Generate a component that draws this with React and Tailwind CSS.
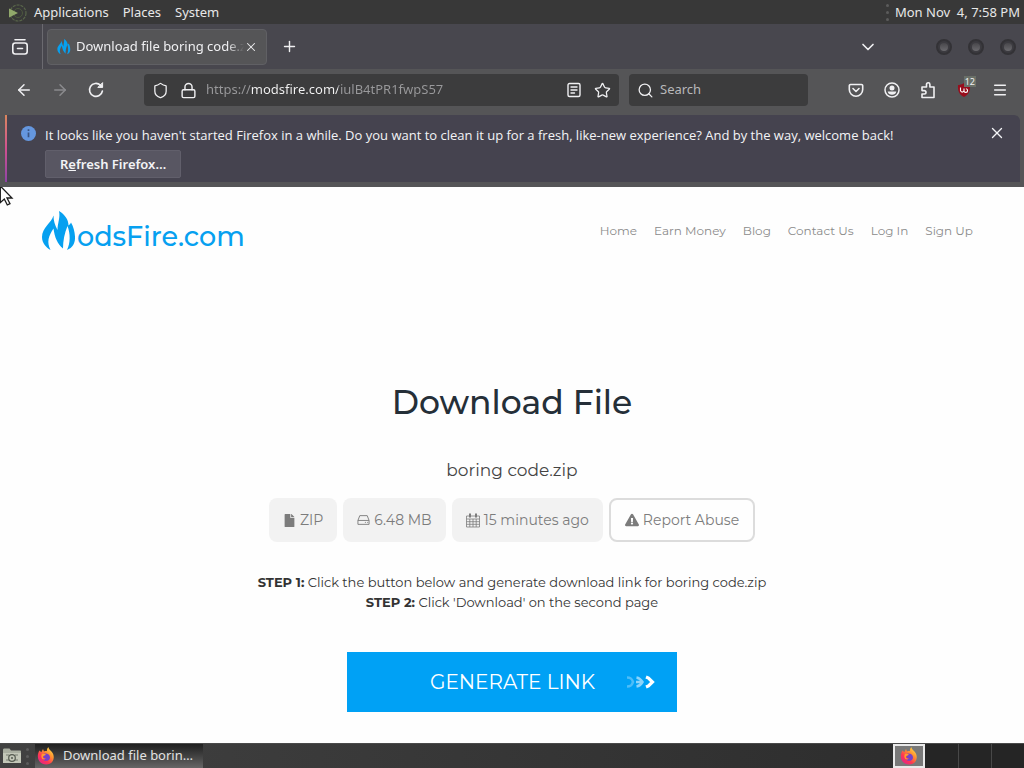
import { useId } from 'react';
import {
  ArrowLeft,
  ArrowRight,
  ChevronDown,
  Lock,
  Menu,
  Plus,
  Search,
  Shield,
  Star,
  X,
} from 'lucide-react';
import { FaExclamationTriangle, FaFile } from 'react-icons/fa';

const UI_FONT = "font-['Noto_Sans',sans-serif]";
const SITE_FONT = "font-['Montserrat',Inter,sans-serif]";

const navLinks = [
  'Home',
  'Earn Money',
  'Blog',
  'Contact Us',
  'Log In',
  'Sign Up',
];

const HistoryIcon = () => (
  <svg width="18" height="18" viewBox="0 0 18 18" fill="none" stroke="currentColor" strokeWidth="1.6" strokeLinecap="round">
    <path d="M4 1.8h10M6.5 10.5h5" />
    <rect x="1.8" y="5" width="14.4" height="11" rx="2.5" />
  </svg>
);

const ReloadIcon = () => (
  <svg width="18" height="18" viewBox="0 0 18 18" fill="none" stroke="currentColor" strokeWidth="1.6" strokeLinecap="round">
    <path d="M15.4 10a6.5 6.5 0 1 1-2-5.9L15 5.7" />
    <path d="M15.6 2v4.4h-4.4z" fill="currentColor" strokeWidth="1" strokeLinejoin="round" />
  </svg>
);

const ReaderIcon = () => (
  <svg width="16" height="16" viewBox="0 0 16 16" fill="none" stroke="currentColor" strokeWidth="1.4" strokeLinecap="round">
    <rect x="2" y="1.5" width="12" height="13" rx="1.5" />
    <path d="M5 5h6M5 8h6M5 11h3.5" />
  </svg>
);

const PocketIcon = () => (
  <svg width="16" height="16" viewBox="0 0 16 16" fill="none" stroke="currentColor" strokeWidth="1.6" strokeLinecap="round" strokeLinejoin="round">
    <path d="M2.5 2.5h11a1.2 1.2 0 0 1 1.2 1.2V7.5a6.7 6.7 0 0 1-13.4 0V3.7a1.2 1.2 0 0 1 1.2-1.2z" />
    <path d="M5 6.5l3 3 3-3" />
  </svg>
);

const AccountIcon = () => (
  <svg width="16" height="16" viewBox="0 0 16 16" fill="none">
    <circle cx="8" cy="8" r="7" stroke="currentColor" strokeWidth="1.5" />
    <circle cx="8" cy="6" r="2.5" fill="currentColor" />
    <path d="M3.7 9.5h8.6c-.3 2.1-2.2 3.3-4.3 3.3s-4-1.2-4.3-3.3z" fill="currentColor" />
  </svg>
);

const PuzzleIcon = () => (
  <svg width="16" height="18" viewBox="1 0 16 18" fill="none" stroke="currentColor" strokeWidth="1.6" strokeLinejoin="round">
    <path d="M3 6h4.5V3.5a1.7 1.7 0 0 1 3.4 0V6H15v10.5H3V13h2.3a1.7 1.7 0 0 0 0-3.4H3z" />
  </svg>
);

const UblockIcon = () => (
  <svg width="16" height="16" viewBox="0 0 16 16" fill="none">
    <path d="M8 1c2.3 1.6 4.3 2 6 2 .4 6-1.2 9.5-6 12C3.2 12.5 1.6 9 2 3c1.7 0 3.700-.4 6-2z" fill="#980d1c" />
    <path d="M4.5 5.5v3.2a1.8 1.8 0 0 0 3.5 0V6.5M8 8.7a1.8 1.8 0 1 0 1.9-1.9" stroke="#fff" strokeWidth="1.1" />
  </svg>
);

const DesktopMenuIcon = () => (
  <svg width="20" height="20" viewBox="0 0 20 20" fill="none">
    <circle cx="10" cy="10" r="8" stroke="#59664a" strokeWidth="1.2" strokeDasharray="3 1" />
    <circle cx="10" cy="10" r="4.5" stroke="#4c583e" strokeWidth="1" />
    <path d="M1 5.5l9 4.5-9 4.5z" fill="#91a86b" />
  </svg>
);

const FlameMark = ({ className }) => (
  <svg className={className} viewBox="0 0 36 41" fill="#06a0f0" aria-hidden="true">
    <path d="M12.5 4.5C10.5 12 1 16.500 1 26c0 6 4 10.500 8.500 13C5.500 31 7.500 25 12.500 17.500 13.500 26 16.500 33 22 37.500c0-8 1.500-15 4.500-22.500 3 8 3 17-.5 24C31.500 37 34.500 32 34 25.500 33.700 20 32.500 16 30 11.500c-.3 1.200-1.300 1.800-2.500 3C27.500 8 23.500 3.500 18 0c1.500 6.500-1.500 12-1.500 19-2.700-5-4-9.500-4-14.500z" />
  </svg>
);

const FirefoxIcon = () => {
  const id = useId();
  return (
    <svg width="18" height="18" viewBox="0 0 18 18" className="shrink-0" aria-hidden="true">
      <defs>
        <linearGradient id={id} x1="1" y1="0" x2="0.2" y2="1">
          <stop offset="0" stopColor="#fff44f" />
          <stop offset=".4" stopColor="#ff9230" />
          <stop offset=".7" stopColor="#ff3850" />
          <stop offset="1" stopColor="#e1228d" />
        </linearGradient>
      </defs>
      <path d="M2.500 3.500L4.300 5.200 6 2l1 2.600C8 4 9 4 10 4.200 9.600 2.500 10.400 1 11.500.2c.3 2.300 2 3.100 3.200 4.500C18.500 9 17.200 17.300 9.200 17.500 1.500 17.500-1.300 9.500 2.500 3.500z" fill={`url(#${id})`} />
      <path d="M5.500 7.500C8 5.600 13 6.500 13 10.500c0 4-6 4.500-7 1.200 1 .7 2 .7 3-.2-1.800 0-3-.8-2.500-2.500z" fill="#7542c9" />
      <path d="M5 7c1.500-.7 3-.3 4 .7-1 .6-2 .8-3 1.600-.6 1.400.5 2.600 2.500 2.400-1 1.200-3.500.8-4-1.200C4.200 9 4.500 8 5 7z" fill="#ff9b2f" />
    </svg>
  );
};

const FileManagerIcon = () => (
  <svg width="20" height="18" viewBox="0 0 20 18" aria-hidden="true">
    <path d="M1 3c0-1 .5-1.500 1.500-1.500h5L9 3.500h9c.7 0 1 .5 1 1V16H1z" fill="#a9aea0" />
    <path d="M1 6h18v10H1z" fill="#c3c7b8" />
    <path d="M4 8h3M13 8h3M4 13h3M13 13h3" stroke="#777d70" />
    <circle cx="10" cy="11" r="3.3" fill="none" stroke="#555b50" strokeWidth="1.2" />
    <circle cx="10" cy="11" r="1" fill="#555b50" />
  </svg>
);

const DriveIcon = () => (
  <svg width="13" height="12" viewBox="0 0 14 12" fill="none" stroke="currentColor" strokeLinejoin="round" aria-hidden="true">
    <path d="M1 6.5L3 1.3h8l2 5.2v4.2H1zM1 6.5h12M8.5 8.6h1M11 8.6h1" />
  </svg>
);

const CalendarIcon = () => (
  <svg width="14" height="15" viewBox="0 0 14 15" fill="none" stroke="currentColor" strokeWidth=".8" aria-hidden="true">
    <path d="M.5 3h13v11H.5zM.5 6h13M.5 8.7h13M.5 11.3h13M3.800 6v8M7 6v8M10.2 6v8" />
    <path d="M4 .5v4M10 .5v4" strokeWidth="2" />
  </svg>
);

const Grip = () => (
  <div className="flex flex-col gap-1" aria-hidden="true">
    {[0, 1, 2].map((i) => (
      <span key={i} className="size-[3px] rounded-full bg-[#5c5c5c]" />
    ))}
  </div>
);

const DesktopPanel = () => (
  <header className="flex h-6 items-center justify-between bg-[#383838] pt-px pr-1 pl-2 text-[13px] text-[#e8e8e8]">
    <nav className="flex items-center gap-3.5" aria-label="Desktop">
      <button className="flex items-center gap-1.5">
        <DesktopMenuIcon />
        Applications
      </button>
      <button>Places</button>
      <button>System</button>
    </nav>
    <div className="flex items-center gap-1.5">
      <Grip />
      <time>Mon Nov&nbsp; 4, 7:58 PM</time>
    </div>
  </header>
);

const WindowButton = ({ label }) => (
  <button
    aria-label={label}
    className="flex size-4 items-center justify-center rounded-full border-2 border-[#333236] bg-[#3c3b40]"
  >
    <span className="size-2 rounded-full bg-linear-to-b from-[#48474b] to-[#6b6a6e]" />
  </button>
);

const TabStrip = () => (
  <div className="flex h-[45px] items-center justify-between bg-[#48474e] pr-2 text-[#f0f0f2]">
    <div className="flex h-full items-center">
      <button aria-label="View recent browsing" className="flex h-full w-[43px] items-center justify-center border-r border-[#6b6a70] pr-0.5">
        <HistoryIcon />
      </button>
      <div className="ml-1 flex h-9 w-[220px] items-center rounded-sm border border-[#606064] bg-[#555557] pr-2 pl-2">
        <FlameMark className="size-4 shrink-0" />
        <span className="ml-1 flex-1 overflow-hidden text-[13px] whitespace-nowrap [mask-image:linear-gradient(to_right,black_90%,transparent)]">
          Download file boring code.zip
        </span>
        <button aria-label="Close tab">
          <X size={14} strokeWidth={1.8} />
        </button>
      </div>
      <button aria-label="New tab" className="ml-3.5">
        <Plus size={17} strokeWidth={2} />
      </button>
    </div>
    <div className="flex items-center">
      <button aria-label="List all tabs" className="mr-[58px]">
        <ChevronDown size={20} strokeWidth={2} />
      </button>
      <div className="flex items-center gap-4">
        <WindowButton label="Minimize" />
        <WindowButton label="Maximize" />
        <WindowButton label="Close" />
      </div>
    </div>
  </div>
);

const Toolbar = () => (
  <div className="flex h-[46px] items-center bg-[#555557] pr-4 pb-1 pl-[15px] text-[#f0f0f2]">
    <div className="flex items-center gap-[18px]">
      <button aria-label="Back"><ArrowLeft size={18} /></button>
      <button aria-label="Forward" className="text-[#8b8b8e]"><ArrowRight size={18} /></button>
      <button aria-label="Reload"><ReloadIcon /></button>
    </div>
    <div className="ml-[39px] flex h-8 flex-1 items-center rounded-sm bg-[#3c3c3d] px-2">
      <Shield size={17} strokeWidth={1.8} className="shrink-0" />
      <Lock size={17} strokeWidth={2} className="ml-[11px] shrink-0" />
      <input
        aria-label="Address"
        defaultValue="https://modsfire.com/iulB4tPR1fwpS57"
        className="ml-[9px] min-w-0 flex-1 bg-[linear-gradient(to_right,#99999b_45px,#f4f4f4_45px,#f4f4f4_132px,#99999b_132px)] bg-clip-text text-[13px] text-transparent outline-none"
      />
      <button aria-label="Reader view"><ReaderIcon /></button>
      <button aria-label="Bookmark this page" className="ml-3"><Star size={17} strokeWidth={1.8} /></button>
    </div>
    <label className="ml-2.5 flex h-8 w-[179px] items-center gap-1.5 rounded-sm bg-[#3c3c3d] px-2">
      <Search size={17} strokeWidth={1.8} className="shrink-0" />
      <input
        type="text"
        aria-label="Search"
        placeholder="Search"
        className="min-w-0 flex-1 text-[13px] outline-none placeholder:text-[#b8b8ba]"
      />
    </label>
    <div className="ml-10 flex items-center gap-5">
      <button aria-label="Save to Pocket"><PocketIcon /></button>
      <button aria-label="Account"><AccountIcon /></button>
      <button aria-label="Extensions"><PuzzleIcon /></button>
      <button aria-label="uBlock Origin" className="relative">
        <UblockIcon />
        <span className="absolute -top-1.5 -right-1 bg-[#6a7068] px-px text-[9px] leading-[11px]">
          12
        </span>
      </button>
      <button aria-label="Open menu"><Menu size={16} strokeWidth={2.2} /></button>
    </div>
  </div>
);

const Notification = () => (
  <div className="bg-[#555557] pr-1 pb-[5px] pl-[5px]">
    <div className="flex items-stretch overflow-hidden rounded-tr-md bg-[#45434f] text-[#f3f3f6]">
      <div className="w-0.5 bg-linear-to-b from-[#d9865b] via-[#d0508f] to-[#8f43a5]" />
      <div className="flex flex-1 items-start px-3.5 pt-[5px] pb-1">
        <svg width="15" height="15" viewBox="0 0 16 16" className="mt-1.5 shrink-0" aria-hidden="true">
          <circle cx="8" cy="8" r="8" fill="#6597df" />
          <path d="M8 7v5M8 3.5v1.8" stroke="#3a5482" strokeWidth="1.8" />
        </svg>
        <div className="ml-[9px] flex-1">
          <p className="pt-[5px] font-['Open_Sans','Noto_Sans',sans-serif] text-[13px] leading-5">
            It looks like you haven't started Firefox in a while. Do you want to clean it up for a fresh, like-new experience? And by the way, welcome back!
          </p>
          <button className="mt-[5px] h-7 rounded-xs border border-[#615f6b] bg-[#585662] px-3.5 pt-0.5 text-[13px] font-semibold">
            R<span className="underline">e</span>fresh Firefox…
          </button>
        </div>
        <button aria-label="Dismiss" className="mt-1"><X size={18} strokeWidth={1.8} /></button>
      </div>
    </div>
  </div>
);

const InfoChip = ({ children }) => (
  <li className="flex h-11 items-center gap-1 rounded-lg bg-[#f2f2f2] px-3.5">
    {children}
  </li>
);

const SitePage = () => (
  <div className={`relative flex-1 bg-[#fefefe] ${SITE_FONT}`}>
    <svg width="14" height="20" viewBox="0 0 14 20" className="absolute top-0 left-0" aria-hidden="true">
      <path d="M.3-1v16.500l4-3.500 3 6 2.700-1.300-3-5.700h5z" fill="#fff" stroke="#1c1c1c" strokeWidth="1.3" />
    </svg>
    <header className="flex items-start justify-between pt-6 pr-[51px] pl-[41px]">
      <a href="#home" className="flex items-end text-[#06a0f0]">
        <FlameMark className="h-[41px] w-9" />
        <span className="text-[27px] leading-[30px] font-medium">odsFire.com</span>
      </a>
      <nav className="flex gap-[17px] pt-3 text-xs leading-4 text-[#8b8b8b]">
        {navLinks.map((link) => (
          <a key={link} href="#nav">{link}</a>
        ))}
      </nav>
    </header>

    <main className="flex flex-col items-center pt-[125px] pb-[31px]">
      <h1 className="text-[33px] leading-[50px] font-medium text-[#252f38]">Download File</h1>
      <h2 className="mt-[31px] text-[17px] leading-6 text-[#444]">boring code.zip</h2>
      <div className="mt-4 flex items-center gap-1.5 text-sm text-[#7c7c7c]">
        <ul className="flex gap-1.5">
          <InfoChip>
            <FaFile size={13} />
            ZIP
          </InfoChip>
          <InfoChip>
            <DriveIcon />
            6.48 MB
          </InfoChip>
          <InfoChip>
            <CalendarIcon />
            15 minutes ago
          </InfoChip>
        </ul>
        <a href="#report" className="flex h-11 items-center gap-1 rounded-lg border-2 border-[#dcdcdc] px-3.5">
          <FaExclamationTriangle size={14} />
          Report Abuse
        </a>
      </div>
      <div className="mt-[30px] text-center text-[13px] leading-5 text-[#333]">
        <p><strong>STEP 1:</strong> Click the button below and generate download link for boring code.zip</p>
        <p><strong>STEP 2:</strong> Click 'Download' on the second page</p>
      </div>
      <button className="mt-10 flex h-[60px] w-[330px] items-center justify-end bg-[#00a1f5] pr-5 text-xl text-white">
        GENERATE LINK
        <svg width="32" height="14" viewBox="0 0 32 14" fill="none" stroke="#fff" strokeWidth="2.5" className="ml-[30px]" aria-hidden="true">
          <path d="M2 2.500c4 0 5 1.500 6 4.500-1 3-2 4.500-6 4.500" opacity=".3" />
          <path d="M11.500 2.500c3 .5 4.500 2 6 4.500-1.500 2.500-3 4-6 4.500M11 7h6" opacity=".55" />
          <path d="M21 2l2.500 1L27.500 7l-4 4-2.500 1" strokeWidth="3.200" />
        </svg>
      </button>
    </main>
  </div>
);

const Taskbar = () => (
  <footer className="flex h-[25px] items-center justify-between border-t border-[#4a4a4a] bg-linear-to-r from-[#414141] to-[#2b2b2b] text-[13px] text-[#e2e2e2]">
    <div className="flex h-full items-center gap-1 pl-0.5">
      <button aria-label="File manager"><FileManagerIcon /></button>
      <Grip />
      <button className="ml-0.5 flex h-full w-[168px] items-center gap-2 bg-linear-to-b from-[#202020] to-[#666] pr-1.5 pl-0.5">
        <FirefoxIcon />
        <span className="truncate">Download file boring code.zip</span>
      </button>
    </div>
    <div className="flex h-full">
      <button aria-label="Workspace 1" className="flex w-8 items-center justify-center border-2 border-[#eaeaea] bg-[#797979]">
        <FirefoxIcon />
      </button>
      <button aria-label="Workspace 2" className="w-[34px] border-r border-[#484848] bg-[#252525]" />
      <button aria-label="Workspace 3" className="w-[33px] border-r border-[#484848] bg-[#252525]" />
      <button aria-label="Workspace 4" className="w-8 bg-[#252525]" />
    </div>
  </footer>
);

const App = () => (
  <div className={`flex min-h-screen flex-col bg-[#fefefe] ${UI_FONT}`}>
    <DesktopPanel />
    <TabStrip />
    <Toolbar />
    <Notification />
    <SitePage />
    <Taskbar />
  </div>
);

export default App;
